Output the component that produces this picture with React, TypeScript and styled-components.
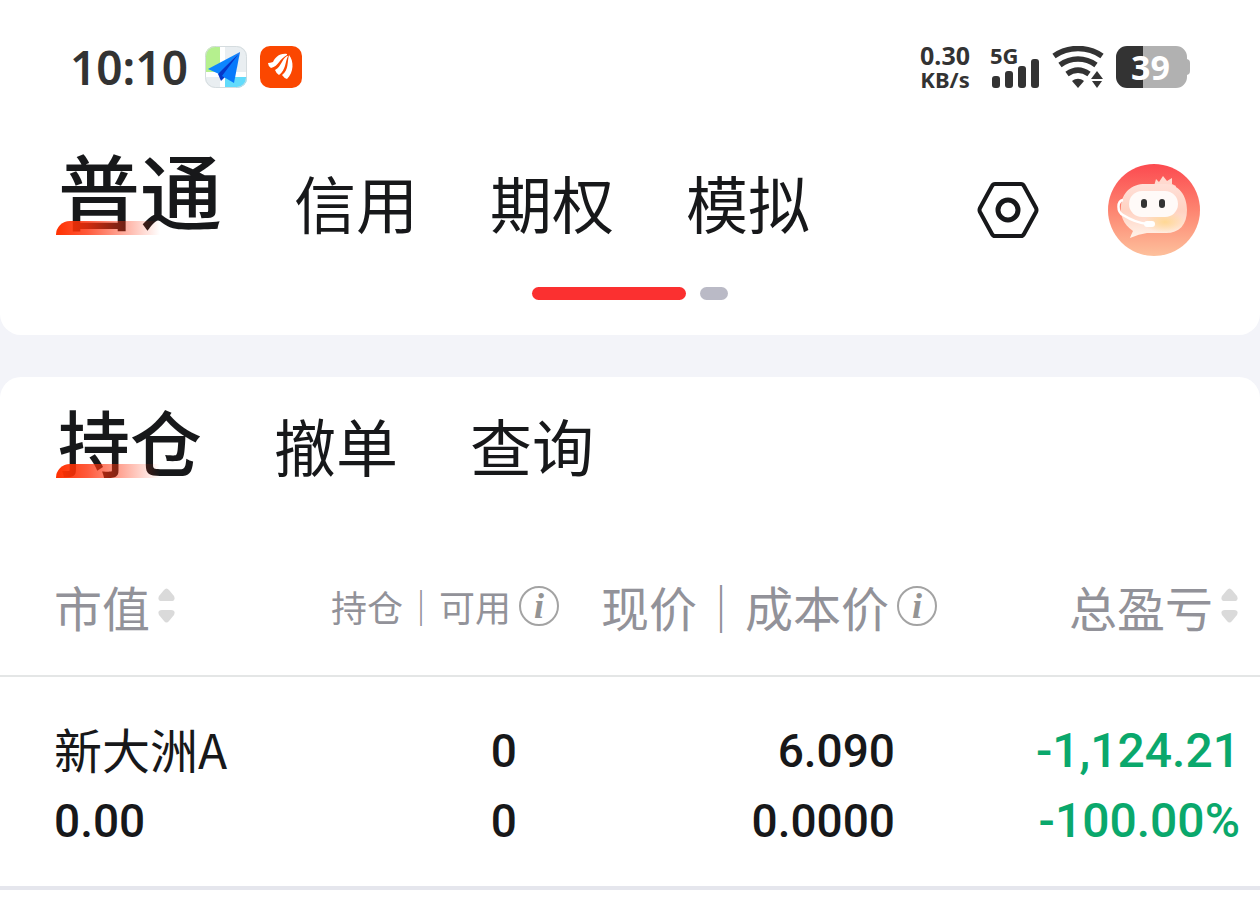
import React from "react";
import styled, { createGlobalStyle } from "styled-components";

const GlobalStyle = createGlobalStyle`
  * { box-sizing: border-box; }
  body {
    margin: 0;
    background: #ffffff;
    color: #17181a;
    font-family: "Noto Sans CJK SC", sans-serif;
  }
  button { border: 0; padding: 0; background: none; color: inherit; font: inherit; cursor: pointer; }
`;

const Page = styled.div`
  display: flex;
  flex-direction: column;
  gap: 42px;
  background: #f3f4f9;
`;

const TopCard = styled.header`
  padding-bottom: 35px;
  border-radius: 0 0 21px 21px;
  background: #ffffff;
`;

const HoldingsCard = styled.main`
  padding: 27px 0 11px;
  border-radius: 21px 21px 0 0;
  background: #ffffff;
`;

const StatusBar = styled.div`
  display: flex;
  align-items: center;
  justify-content: space-between;
  height: 134px;
  padding: 0 70px;
  color: #333333;
  font-family: "Noto Sans", sans-serif;
`;

const StatusGroup = styled.div<{ $gap: number }>`
  display: flex;
  align-items: center;
  gap: ${(p) => p.$gap}px;
`;

const Clock = styled.time`
  margin-right: 4px;
  font-size: 46px;
  line-height: 48px;
  font-weight: 600;
`;

const NetSpeed = styled.div`
  display: flex;
  flex-direction: column;
  align-items: center;
  margin-right: 8px;
  font-size: 25px;
  line-height: 24px;
  font-weight: 700;
`;

const SpeedUnit = styled.span`
  font-size: 22px;
`;

const Signal = styled.div`
  position: relative;
  display: flex;
  width: 50px;
  height: 42px;
`;

const SignalLabel = styled.span`
  position: absolute;
  left: 0;
  top: -2px;
  font-size: 22px;
  line-height: 22px;
  font-weight: 700;
`;

const Battery = styled.div`
  position: relative;
  display: flex;
  width: 74px;
  height: 42px;
`;

const BatteryLevel = styled.span`
  position: absolute;
  inset: 0 5px 0 0;
  color: #ffffff;
  font-size: 34px;
  line-height: 42px;
  font-weight: 700;
  text-align: center;
`;

const AccountBar = styled.div`
  display: flex;
  align-items: flex-start;
  justify-content: space-between;
  padding: 11px 60px 0 58px;
`;

const Actions = styled.div`
  display: flex;
  align-items: center;
  gap: 69px;
  padding-top: 19px;
`;

const IconButton = styled.button`
  display: flex;
`;

const Tabs = styled.nav`
  display: flex;
  align-items: flex-end;
  gap: 72px;
`;

const HoldingTabs = styled(Tabs)`
  padding: 0 58px;
`;

const Tab = styled.a`
  font-size: 62px;
  line-height: 62px;
  color: #17181a;
  text-decoration: none;
  white-space: nowrap;
`;

const ActiveTab = styled(Tab)<{ $size: number; $line: number }>`
  position: relative;
  font-size: ${(p) => p.$size}px;
  line-height: ${(p) => p.$line}px;
  font-weight: 500;

  &::after {
    content: "";
    position: absolute;
    left: -2px;
    bottom: -2px;
    width: 104px;
    height: 14px;
    border-radius: 14px 0 0 0;
    background: linear-gradient(90deg, #ff3000 0%, rgba(255, 48, 10, 0.8) 30%, rgba(255, 60, 30, 0) 100%);
  }
`;

const Pager = styled.div`
  display: flex;
  justify-content: center;
  gap: 14px;
  margin-top: 31px;
`;

const PagerDot = styled.span<{ $active?: boolean }>`
  width: ${(p) => (p.$active ? 154 : 28)}px;
  height: 13px;
  border-radius: 7px;
  background: ${(p) => (p.$active ? "#fb3030" : "#babac6")};
`;

const Table = styled.table`
  width: 100%;
  margin-top: 66px;
  border-collapse: separate;
  border-spacing: 0;
  table-layout: fixed;
`;

const Col = styled.col<{ $width: number }>`
  width: ${(p) => p.$width}%;
`;

const HeadCell = styled.th<{ $align?: "right" }>`
  height: 135px;
  padding: 0 ${(p) => (p.$align ? 8 : 0)}px 6px ${(p) => (p.$align ? 0 : 54)}px;
  border-bottom: 2px solid #e4e6e6;
  color: #929299;
  font-weight: 400;

  &:last-child { padding-right: 22px; }
`;

const HeadContent = styled.div<{ $align?: "right"; $small?: boolean }>`
  display: flex;
  align-items: center;
  justify-content: ${(p) => (p.$align ? "flex-end" : "flex-start")};
  gap: 8px;
  font-size: ${(p) => (p.$small ? 36 : 48)}px;
  line-height: 48px;
  white-space: nowrap;
`;

const SortButton = styled.button`
  display: flex;
  align-items: center;
  gap: 8px;
`;

const InfoButton = styled.button`
  width: 40px;
  height: 40px;
  border: 2px solid #a3a3a3;
  border-radius: 50%;
  color: #949494;
  font: italic 700 36px/34px "Liberation Serif", serif;
  text-align: center;
`;

const Cell = styled.td<{ $align?: "right"; $loss?: boolean }>`
  padding: 39px ${(p) => (p.$align ? 50 : 0)}px 30px ${(p) => (p.$align ? 0 : 54)}px;
  border-bottom: 4px solid #e5e6ed;
  color: ${(p) => (p.$loss ? "#0aa86c" : "#17181a")};
  text-align: ${(p) => p.$align ?? "left"};

  &:last-child { padding-right: 20px; }
`;

const StockName = styled.div`
  padding-bottom: 6px;
  font-size: 48px;
  line-height: 64px;
`;

const Figure = styled.div<{ $large?: boolean }>`
  font-family: Roboto, sans-serif;
  font-size: ${(p) => (p.$large ? 48 : 46)}px;
  line-height: 70px;
  font-weight: 500;
`;

function MapAppIcon() {
  return (
    <svg width="42" height="42" viewBox="0 0 42 42" aria-hidden="true">
      <defs>
        <clipPath id="map-tile"><rect width="42" height="42" rx="10" /></clipPath>
      </defs>
      <g clipPath="url(#map-tile)">
        <rect width="42" height="42" fill="#e9eef1" />
        <path d="M0 0h15v26H0z" fill="#b5f08e" />
        <path d="M20 30h22v12H20z" fill="#62dbfb" />
        <path d="M15 0h5v42h-5zM0 26h42v5H0z" fill="#ffffff" />
      </g>
      <rect x=".5" y=".5" width="41" height="41" rx="10" fill="none" stroke="#d5dcdf" />
      <path d="M35 6 3 23l11 5z" fill="#0c86ff" />
      <path d="M35 6 13 28l3 7 5-5z" fill="#0637c8" />
      <path d="M35 6 17 30l12 7z" fill="#0879fb" />
    </svg>
  );
}

function BrokerAppIcon() {
  return (
    <svg width="42" height="42" viewBox="0 0 42 42" aria-hidden="true">
      <rect width="42" height="42" rx="10" fill="#fb4700" />
      <g fill="#ffffff">
        <path d="M27 8C19 7 15 12 13 16q-3 1-5 1 0 3 3 5C19 20 19 13 27 9z" />
        <path d="M27 10C21 14 22 20 15 24q1 3 4 5C26 24 25 16 28 10z" />
        <path d="M29 9C27 16 29 24 22 29q2 3 5 4C34 26 34 15 29 9z" />
      </g>
    </svg>
  );
}

function SignalBars() {
  return (
    <svg width="50" height="42" viewBox="0 0 50 42" fill="#333333" aria-hidden="true">
      <rect x="2" y="30" width="8" height="12" rx="3" />
      <rect x="15" y="25" width="8" height="17" rx="3" />
      <rect x="28" y="20" width="8" height="22" rx="3" />
      <rect x="41" y="13" width="8" height="29" rx="3" />
    </svg>
  );
}

function WifiIcon() {
  return (
    <svg width="52" height="42" viewBox="0 0 52 42" aria-hidden="true">
      <g fill="none" stroke="#333333" strokeWidth="5.500">
        <path d="M2 10C16 0 36 0 50 10" />
        <path d="M8 19c11-8 25-8 36 0" />
        <path d="M15 28c7-5 15-5 22 0" />
      </g>
      <path d="M20 35c4-3 8-3 12 0l-6 7z" fill="#333333" />
      <path d="m45 25 6 8H39z" fill="#333333" stroke="#ffffff" strokeWidth="3" paintOrder="stroke" />
      <path d="m45 42-5-7h10z" fill="#333333" />
    </svg>
  );
}

function BatteryShape() {
  return (
    <svg width="74" height="42" viewBox="0 0 74 42" aria-hidden="true">
      <path d="M11 0h49a11 11 0 0 1 11 11v2l2 1q1 1 1 3v8q0 2-1 3l-2 1v2a11 11 0 0 1-11 11H11z" fill="#b1b1b1" />
      <path d="M27 0H11A11 11 0 0 0 0 11v20a11 11 0 0 0 11 11h16z" fill="#333333" />
    </svg>
  );
}

function SettingsIcon() {
  return (
    <svg width="62" height="58" viewBox="0 0 62 58" fill="none" stroke="#17181a" strokeWidth="4" aria-hidden="true">
      <path d="M18 3h26q2 0 3 2l12 22q1 2 0 4L47 53q-1 2-3 2H18q-2 0-3-2L3 31q-1-2 0-4L15 5q1-2 3-2z" />
      <circle cx="31" cy="29" r="10" strokeWidth="5" />
    </svg>
  );
}

function AssistantAvatar() {
  return (
    <svg width="92" height="92" viewBox="0 0 92 92" aria-hidden="true">
      <defs>
        <linearGradient id="avatar-sky" x1="0" y1="0" x2="0" y2="1">
          <stop offset="0" stopColor="#fc4a50" />
          <stop offset=".5" stopColor="#fd8470" />
          <stop offset="1" stopColor="#fdc09c" />
        </linearGradient>
        <linearGradient id="avatar-head" x1="0" y1="0" x2="0" y2="1">
          <stop offset="0" stopColor="#ffe0d8" />
          <stop offset=".5" stopColor="#ffd2c2" />
          <stop offset="1" stopColor="#fff3ea" />
        </linearGradient>
        <radialGradient id="avatar-glow">
          <stop offset="0" stopColor="#ffd894" />
          <stop offset="1" stopColor="#ffd894" stopOpacity="0" />
        </radialGradient>
      </defs>
      <circle cx="46" cy="46" r="46" fill="url(#avatar-sky)" />
      <path d="M46 22l2-7 3 3 4-6 4 5 5-3v6l4 2-2 6z" fill="#ffd9cf" />
      <path d="M37 20h20c14 0 22 12 22 26 0 15-8 23-21 23H39q-8 1-17 5 1-3 3-7C15 60 12 51 13 42c1-14 11-22 24-22z" fill="url(#avatar-head)" />
      <ellipse cx="57" cy="58" rx="21" ry="11" fill="url(#avatar-glow)" />
      <rect x="21" y="27" width="49" height="26" rx="13" fill="#fffaf8" />
      <rect x="33" y="35" width="6" height="9" rx="3" fill="#343434" />
      <rect x="51" y="35" width="6" height="9" rx="3" fill="#343434" />
      <path d="M15 36c-6 1-6 12 0 15 8 5 15 8 24 9" fill="none" stroke="#ffffff" strokeWidth="2.500" />
      <rect x="36" y="57" width="11" height="6" rx="3" fill="#ffffff" />
    </svg>
  );
}

function SortArrows() {
  return (
    <svg width="17" height="36" viewBox="0 0 17 36" fill="#dadada" aria-hidden="true">
      <path d="M6 2q2.500-3 5 0l5 6q2 5-3 5H4q-5 0-3-5z" />
      <path d="M6 33q2.500 3 5 0l5-6q2-5-3-5H4q-5 0-3 5z" />
    </svg>
  );
}

const accountTabs = ["信用", "期权", "模拟"];
const holdingTabs = ["撤单", "查询"];
const holdings = [
  {
    name: "新大洲A",
    value: "0.00",
    held: "0",
    available: "0",
    price: "6.090",
    cost: "0.0000",
    profit: "-1,124.21",
    rate: "-100.00%",
  },
];

export default function App() {
  return (
    <>
      <GlobalStyle />
      <Page>
        <TopCard>
          <StatusBar>
            <StatusGroup $gap={13}>
              <Clock>10:10</Clock>
              <MapAppIcon />
              <BrokerAppIcon />
            </StatusGroup>
            <StatusGroup $gap={12}>
              <NetSpeed>
                <span>0.30</span>
                <SpeedUnit>KB/s</SpeedUnit>
              </NetSpeed>
              <Signal>
                <SignalBars />
                <SignalLabel>5G</SignalLabel>
              </Signal>
              <WifiIcon />
              <Battery>
                <BatteryShape />
                <BatteryLevel>39</BatteryLevel>
              </Battery>
            </StatusGroup>
          </StatusBar>
          <AccountBar>
            <Tabs aria-label="账户">
              <ActiveTab href="#normal" $size={82} $line={88} aria-current="page">普通</ActiveTab>
              {accountTabs.map((label) => (
                <Tab key={label} href={`#${label}`}>{label}</Tab>
              ))}
            </Tabs>
            <Actions>
              <IconButton type="button" aria-label="设置"><SettingsIcon /></IconButton>
              <IconButton type="button" aria-label="客服"><AssistantAvatar /></IconButton>
            </Actions>
          </AccountBar>
          <Pager>
            <PagerDot $active />
            <PagerDot />
          </Pager>
        </TopCard>

        <HoldingsCard>
          <HoldingTabs aria-label="交易">
            <ActiveTab href="#holdings" $size={72} $line={72} aria-current="page">持仓</ActiveTab>
            {holdingTabs.map((label) => (
              <Tab key={label} href={`#${label}`}>{label}</Tab>
            ))}
          </HoldingTabs>
          <Table>
            <colgroup>
              <Col $width={20} />
              <Col $width={25} />
              <Col $width={30} />
              <Col $width={25} />
            </colgroup>
            <thead>
              <tr>
                <HeadCell scope="col">
                  <HeadContent>
                    <SortButton type="button">市值<SortArrows /></SortButton>
                  </HeadContent>
                </HeadCell>
                <HeadCell scope="col" $align="right">
                  <HeadContent $align="right" $small>
                    <span>持仓｜可用</span>
                    <InfoButton type="button" aria-label="持仓说明">i</InfoButton>
                  </HeadContent>
                </HeadCell>
                <HeadCell scope="col" $align="right">
                  <HeadContent $align="right">
                    <span>现价｜成本价</span>
                    <InfoButton type="button" aria-label="成本价说明">i</InfoButton>
                  </HeadContent>
                </HeadCell>
                <HeadCell scope="col" $align="right">
                  <HeadContent $align="right">
                    <SortButton type="button">总盈亏<SortArrows /></SortButton>
                  </HeadContent>
                </HeadCell>
              </tr>
            </thead>
            <tbody>
              {holdings.map((row) => (
                <tr key={row.name}>
                  <Cell>
                    <StockName>{row.name}</StockName>
                    <Figure>{row.value}</Figure>
                  </Cell>
                  <Cell $align="right">
                    <Figure>{row.held}</Figure>
                    <Figure>{row.available}</Figure>
                  </Cell>
                  <Cell $align="right">
                    <Figure>{row.price}</Figure>
                    <Figure>{row.cost}</Figure>
                  </Cell>
                  <Cell $align="right" $loss>
                    <Figure $large>{row.profit}</Figure>
                    <Figure $large>{row.rate}</Figure>
                  </Cell>
                </tr>
              ))}
            </tbody>
          </Table>
        </HoldingsCard>
      </Page>
    </>
  );
}
